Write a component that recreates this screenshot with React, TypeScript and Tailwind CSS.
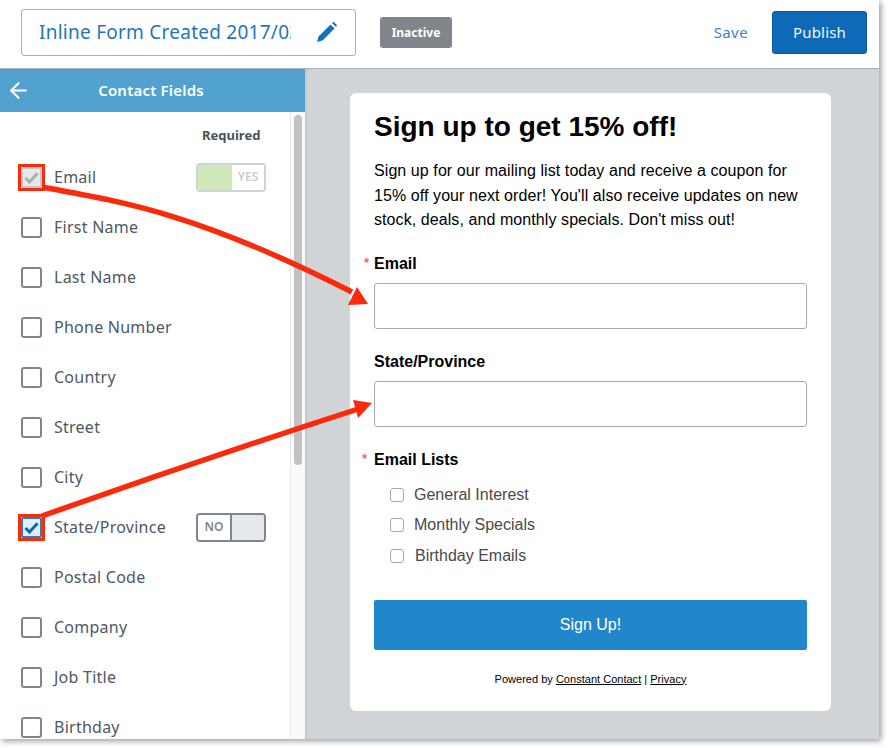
import React from "react";
import { ArrowLeft } from "lucide-react";

const Check = ({ color }: { color: string }) => (
  <svg width="15" height="13" viewBox="0 0 15 13">
    <path d="M1.5 7 L5.5 11 L13.5 2.2" fill="none" stroke={color} strokeWidth="3" />
  </svg>
);

const Box = ({ variant }: { variant?: "disabled" | "checked" }) => {
  if (variant === "disabled")
    return (
      <div className="relative w-[21px] h-[21px] rounded-[2px] border-2 border-[#c3c7cc] bg-[#e6e8ea] flex items-center justify-center">
        <Check color="#a9adb2" />
        <div className="absolute -inset-[5px] border-[3px] border-[#fa2a0a]" />
      </div>
    );
  if (variant === "checked")
    return (
      <div className="relative w-[21px] h-[21px] rounded-[2px] border-2 border-[#2a7fc4] bg-[#e4eef7] flex items-center justify-center">
        <Check color="#0f68b6" />
        <div className="absolute -inset-[5px] border-[3px] border-[#fa2a0a]" />
      </div>
    );
  return <div className="w-[21px] h-[21px] rounded-[3px] border-2 border-[#7d8791] bg-white" />;
};

const Row = ({ label, variant, toggle }: { label: string; variant?: "disabled" | "checked"; toggle?: "yes" | "no" }) => (
  <div className="h-[50px] shrink-0 flex items-center pl-[21px]">
    <Box variant={variant} />
    <span className="ml-3 text-[16px] tracking-[0.25px] text-[#4d5863]">{label}</span>
    {toggle === "yes" && (
      <div className="ml-auto mr-[24px] w-[70px] h-[29px] rounded-[4px] border-2 border-[#d0d3d6] flex overflow-hidden">
        <div className="w-[34px] bg-[#d0e9b8]" />
        <div className="flex-1 bg-white text-[12px] font-semibold text-[#c9ccd0] flex items-center justify-center">YES</div>
      </div>
    )}
    {toggle === "no" && (
      <div className="ml-auto mr-[24px] w-[70px] h-[29px] rounded-[4px] border-2 border-[#7d8791] flex overflow-hidden">
        <div className="w-[34px] bg-white border-r-2 border-[#7d8791] text-[12px] font-semibold text-[#7d8791] flex items-center justify-center">NO</div>
        <div className="flex-1 bg-[#e6e8ea]" />
      </div>
    )}
  </div>
);

const ListItem = ({ label, gap }: { label: string; gap: string }) => (
  <div className="h-[30.5px] flex items-center pl-4">
    <div className="w-[14px] h-[14px] rounded-[3px] border border-[#a8a8a8] bg-white shrink-0" />
    <span className={`${gap} text-[16px] text-[#4a4a4a]`}>{label}</span>
  </div>
);

export default function App() {
  return (
    <div className="w-[889px] h-[748px] bg-white overflow-hidden">
      <div className="relative w-[879px] h-[739px] bg-white shadow-[2px_2px_6px_rgba(0,0,0,0.4)] flex flex-col overflow-hidden font-['Noto_Sans',sans-serif]">
        <header className="h-[69px] shrink-0 border-b border-[#a9aeb3] flex items-center bg-white pb-[3px]">
          <div className="ml-[21px] w-[335px] h-[47px] border border-[#a9aeb3] rounded-[3px] flex items-center pl-[17px] pr-[17px]">
            <span className="w-[252px] overflow-hidden whitespace-nowrap text-[19px] tracking-[0.25px] text-[#1f76bd]">Inline Form Created 2017/03</span>
            <svg className="ml-auto mb-[2px]" width="22" height="22" viewBox="0 0 22 22">
              <path d="M1 21 L2.5 15.5 L14.5 3.5 L18.5 7.5 L6.5 19.5 Z M16 2 L17.5 0.8 L21 4.3 L20 6 Z" fill="#1370bd" />
            </svg>
          </div>
          <div className="ml-6 w-[72px] h-[31px] rounded-[3px] bg-[#81868d] text-white text-[12px] font-bold flex items-center justify-center">Inactive</div>
          <span className="ml-auto text-[15px] tracking-[0.4px] text-[#3b84c4]">Save</span>
          <div className="ml-[24px] mr-3 w-[95px] h-[43px] rounded-[3px] bg-[#0e69b8] border border-[#0b5a9f] text-[#f2f6fa] text-[15px] tracking-[0.2px] flex items-center justify-center">Publish</div>
        </header>
        <div className="flex flex-1 min-h-0">
          <aside className="w-[305px] shrink-0 flex flex-col">
            <div className="h-[43px] shrink-0 bg-[#52a2d0] flex items-center relative">
              <ArrowLeft className="ml-[6px] text-white" size={25} strokeWidth={2} />
              <span className="absolute left-0 w-[302px] text-center text-white text-[15px] font-semibold tracking-[0.2px]">Contact Fields</span>
            </div>
            <div className="flex flex-1 min-h-0">
              <div className="flex-1 flex flex-col overflow-hidden">
                <div className="h-[40px] shrink-0 pt-[14px] pl-[202px] text-[13px] font-bold text-[#47525d] leading-[18px]">Required</div>
                <Row label="Email" variant="disabled" toggle="yes" />
                <Row label="First Name" />
                <Row label="Last Name" />
                <Row label="Phone Number" />
                <Row label="Country" />
                <Row label="Street" />
                <Row label="City" />
                <Row label="State/Province" variant="checked" toggle="no" />
                <Row label="Postal Code" />
                <Row label="Company" />
                <Row label="Job Title" />
                <Row label="Birthday" />
              </div>
              <div className="w-[15px] shrink-0 bg-[#fafafa] border-l border-[#e8e8e8] pl-[3px] pt-[3px]">
                <div className="w-[8px] h-[350px] rounded-full bg-[#c2c2c2]" />
              </div>
            </div>
          </aside>
          <main className="flex-1 bg-[#d1d4d7] border-l-2 border-[#c6c9cc] pt-[24px] pl-[43px]">
            <div className="w-[481px] h-[618px] bg-white rounded-[6px] px-6 pt-[16px] font-['Liberation_Sans',sans-serif]">
              <h1 className="text-[28px] leading-[36px] font-bold text-black">Sign up to get 15% off!</h1>
              <p className="mt-[14px] text-[16px] leading-[24.5px] tracking-[0.08px] text-black">
                Sign up for our mailing list today and receive a coupon for 15% off your next order! You'll also receive updates on new stock, deals, and monthly specials. Don't miss out!
              </p>
              <div className="relative mt-[21px] text-[16px] leading-[20px] font-bold text-black">
                <span className="absolute -left-[10px] -top-[1px] text-[13px] font-bold text-[#f4635c]">*</span>Email
              </div>
              <div className="mt-[9px] h-[46px] border border-[#a6abb0] rounded-[3px]" />
              <div className="mt-[23px] text-[16px] leading-[20px] font-bold text-black">State/Province</div>
              <div className="mt-[9px] h-[46px] border border-[#a6abb0] rounded-[3px]" />
              <div className="relative mt-[23px] text-[16px] leading-[20px] font-bold text-black">
                <span className="absolute -left-[12px] -top-[1px] text-[13px] font-bold text-[#f4635c]">*</span>Email Lists
              </div>
              <div className="mt-[10px] flex flex-col">
                <ListItem label="General Interest" gap="ml-[10px]" />
                <ListItem label="Monthly Specials" gap="ml-[10px]" />
                <ListItem label="Birthday Emails" gap="ml-[11px]" />
              </div>
              <div className="mt-[28.5px] h-[50px] rounded-[2px] bg-[#2286ca] text-white text-[16px] flex items-center justify-center">Sign Up!</div>
              <div className="mt-[21px] text-center text-[11px] leading-[16px] tracking-[0.02px] text-black">
                Powered by <span className="underline">Constant Contact</span> | <span className="underline">Privacy</span>
              </div>
            </div>
          </main>
        </div>
        <svg className="absolute left-0 top-0 pointer-events-none" width="879" height="739" viewBox="0 0 879 739">
          <path d="M42 187 C 130 203, 200 215, 352 292" fill="none" stroke="#fa2a0a" strokeWidth="5.5" />
          <polygon points="368,304 348,305 357,287" fill="#fa2a0a" />
          <path d="M42 516 Q 200 460, 358 409" fill="none" stroke="#fa2a0a" strokeWidth="5.5" />
          <polygon points="372,403 358,418 353,400" fill="#fa2a0a" />
        </svg>
      </div>
    </div>
  );
}
